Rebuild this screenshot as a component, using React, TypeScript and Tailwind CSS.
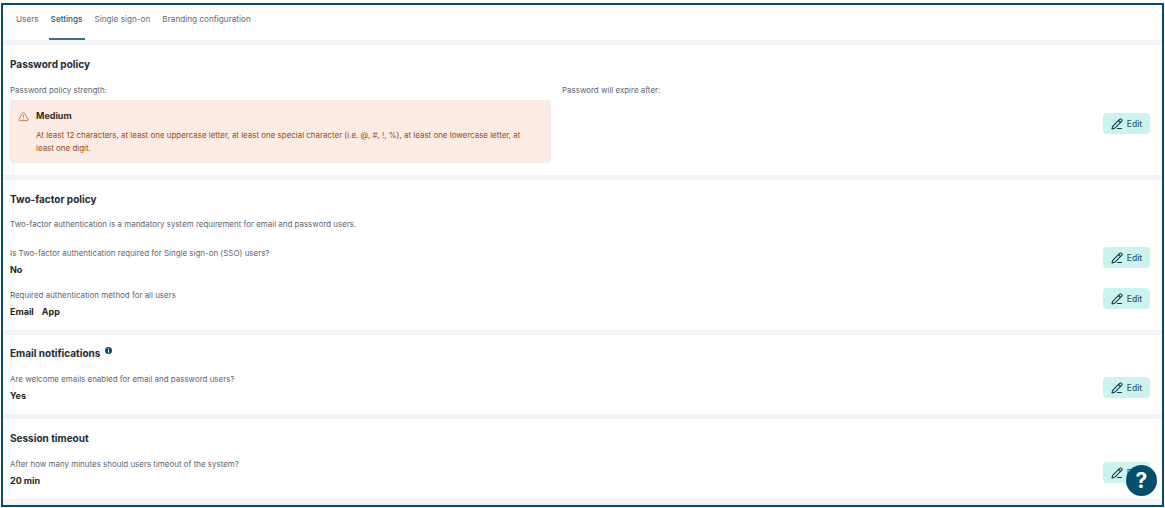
import React from 'react';
import { PencilLine, TriangleAlert } from 'lucide-react';

const EditButton: React.FC = () => (
  <button className="flex h-[21px] w-[47px] items-center justify-center gap-[4px] rounded-[4px] bg-[#cdf3ef] text-[8.5px] leading-[21px] font-medium text-[#33566a]">
    <PencilLine className="h-[12px] w-[12px] text-[#0b3d52]" strokeWidth={2.2} />
    <span className="pt-[1px]">Edit</span>
  </button>
);

const Label: React.FC<{ children: React.ReactNode }> = ({ children }) => (
  <p className="text-[7.95px] leading-[12px] text-[#5d6673]">{children}</p>
);

const Value: React.FC<{ children: React.ReactNode }> = ({ children }) => (
  <p className="mt-[5px] text-[9px] leading-[12px] font-bold text-[#2a2520]">{children}</p>
);

const Title: React.FC<{ children: React.ReactNode }> = ({ children }) => (
  <h2 className="text-[10px] leading-[14px] font-bold text-[#242b35]">{children}</h2>
);

const App: React.FC = () => {
  return (
    <div className="h-[508px] w-[1165px] bg-white pt-[3px] pr-[1px] pb-[1px] pl-[1px] font-['Inter',sans-serif]">
      <div className="relative flex h-full flex-col border-2 border-[#04506b] bg-[#f3f4f7]">
        {/* tabs */}
        <div className="flex h-[35px] shrink-0 gap-[10px] bg-white pl-[13px] text-[8.2px]">
          <div className="pt-[8px] text-[#636b76]">Users</div>
          <div className="h-[35px] border-b-2 border-[#3f6f84] px-[2px] pt-[8px] font-medium text-[#33566a]">Settings</div>
          <div className="pt-[8px] text-[#636b76]">Single sign-on</div>
          <div className="ml-[2px] pt-[8px] text-[#636b76]">Branding configuration</div>
        </div>

        {/* password policy */}
        <section className="mt-[5px] flex h-[130px] shrink-0 bg-white pt-[12px] pr-[12px] pl-[7px]">
          <div className="w-[541px] shrink-0">
            <Title>Password policy</Title>
            <div className="mt-[13px]">
              <Label>Password policy strength:</Label>
            </div>
            <div className="mt-[4px] flex h-[63px] gap-[7px] rounded-[4px] bg-[#faece4] pt-[10px] pr-[24px] pl-[8px]">
              <TriangleAlert className="mt-[1px] h-[11px] w-[11px] shrink-0 text-[#d0652c]" strokeWidth={1.8} />
              <div>
                <p className="text-[9px] leading-[12px] font-bold text-[#3b2a20]">Medium</p>
                <p className="mt-[7px] text-[7.95px] leading-[13px] text-[#9a4a14]">
                  At least 12 characters, at least one uppercase letter, at least one special character (i.e. @, #, !, %), at least one lowercase letter, at least one digit.
                </p>
              </div>
            </div>
          </div>
          <div className="ml-[11px] flex-1 pt-[27px]">
            <Label>Password will expire after:</Label>
          </div>
          <div className="pt-[56px]">
            <EditButton />
          </div>
        </section>

        {/* two-factor policy */}
        <section className="mt-[5px] h-[150px] shrink-0 bg-white pt-[12px] pr-[12px] pl-[7px]">
          <Title>Two-factor policy</Title>
          <div className="mt-[12px]">
            <Label>Two-factor authentication is a mandatory system requirement for email and password users.</Label>
          </div>
          <div className="mt-[17px] flex items-start justify-between">
            <div>
              <Label>Is Two-factor authentication required for Single sign-on (SSO) users?</Label>
              <Value>No</Value>
            </div>
            <EditButton />
          </div>
          <div className="mt-[13px] flex items-start justify-between">
            <div>
              <Label>Required authentication method for all users</Label>
              <Value>
                Email<span className="ml-[8px]">App</span>
              </Value>
            </div>
            <div className="mt-[-1px]">
              <EditButton />
            </div>
          </div>
        </section>

        {/* email notifications */}
        <section className="mt-[5px] h-[79px] shrink-0 bg-white pt-[11px] pr-[12px] pl-[7px]">
          <div className="flex items-start gap-[5px]">
            <Title>Email notifications</Title>
            <svg className="mt-[1px] h-[7px] w-[7px]" viewBox="0 0 8 8">
              <circle cx="4" cy="4" r="4" fill="#04506b" />
              <rect x="3.4" y="3.4" width="1.2" height="3" fill="#fff" />
              <rect x="3.4" y="1.5" width="1.2" height="1.2" fill="#fff" />
            </svg>
          </div>
          <div className="mt-[13px] flex items-start justify-between">
            <div>
              <Label>Are welcome emails enabled for email and password users?</Label>
              <Value>Yes</Value>
            </div>
            <div className="mt-[4px]">
              <EditButton />
            </div>
          </div>
        </section>

        {/* session timeout */}
        <section className="mt-[5px] h-[80px] shrink-0 bg-white pt-[12px] pr-[12px] pl-[7px]">
          <Title>Session timeout</Title>
          <div className="mt-[13px] flex items-start justify-between">
            <div>
              <Label>After how many minutes should users timeout of the system?</Label>
              <Value>20 min</Value>
            </div>
            <div className="mt-[4px]">
              <EditButton />
            </div>
          </div>
        </section>

        {/* help button */}
        <button className="absolute right-[5px] bottom-[9px] flex h-[31px] w-[31px] items-center justify-center rounded-full bg-[#04506b] text-[21px] font-bold text-white">
          ?
        </button>
      </div>
    </div>
  );
};

export default App;
